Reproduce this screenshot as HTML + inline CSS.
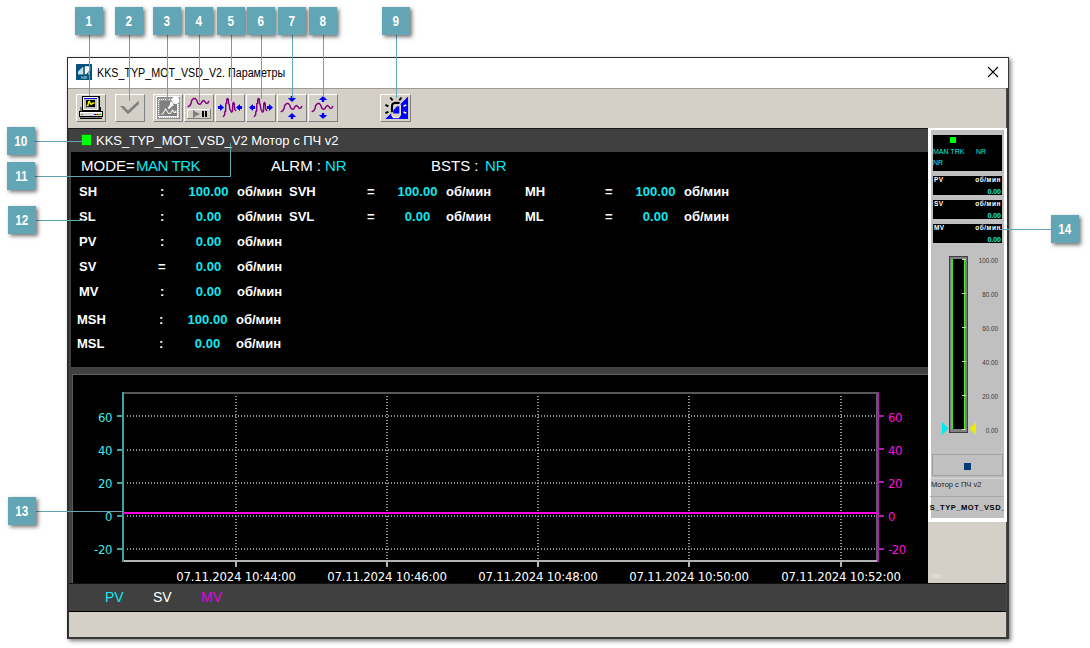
<!DOCTYPE html>
<html lang="ru">
<head>
<meta charset="utf-8">
<title>KKS_TYP_MOT_VSD_V2. Параметры</title>
<style>
*{box-sizing:border-box;margin:0;padding:0}
html,body{width:1090px;height:648px;overflow:hidden;background:#fff}
body{position:relative;font-family:"Liberation Sans",sans-serif;color:#fff}
.a{position:absolute}
.t{position:absolute;white-space:nowrap;line-height:1}
/* callouts */
.co{position:absolute;width:28px;height:28px;background:#62a5b5;color:#fff;font-weight:bold;font-size:14px;line-height:29px;text-align:center;box-shadow:2px 2px 4px rgba(0,0,0,.55);z-index:30;font-family:"Liberation Sans",sans-serif}
.co span{display:inline-block;transform:scaleX(.84)}
.ln{position:absolute;background:#62a5b5;z-index:29}
/* window */
#win{left:67px;top:57px;width:942px;height:582px;background:#d4d0c8;border:1px solid #2c2c2c;border-right:2px solid #383838;border-bottom:2px solid #383838;box-shadow:2px 2px 4px rgba(0,0,0,.5)}
#title{left:68px;top:58px;width:940px;height:30px;background:#fff}
.btn{position:absolute;top:94px;width:30px;height:28px;background:#d4d0c8;border:1px solid;border-color:#fff #808080 #808080 #fff}
.cy{color:#10e8f0}
.b{font-weight:bold}
.fp{font-size:7px}
.fu{letter-spacing:.55px;font-size:6.5px}
.fl{font-size:6.5px;letter-spacing:.3px}
.gl{font-size:6.3px;color:#383838}
.ch{font-family:"DejaVu Sans Condensed","DejaVu Sans",sans-serif;font-size:13px;letter-spacing:-0.4px}
.tm{letter-spacing:-0.19px}
.r{font-size:13px;color:#fff}
.r.cy{color:#10e8f0}
.v{width:81px;text-align:center}
</style>
</head>
<body>
<!-- WINDOW -->
<div id="win" class="a"></div>
<div id="title" class="a"></div>
<div class="a" style="left:68px;top:88px;width:939px;height:1px;background:#9c9a96"></div>
<svg class="a" style="left:76px;top:64px" width="16" height="16" viewBox="76 64 16 16"><rect x="76" y="64" width="16" height="16" rx=".6" fill="#02527a"/><path d="M78 71.5 L82.7 67 L83.2 67 L83.2 74.4 L78 74.4 Z" fill="#c6dbe6"/><rect x="83.2" y="67" width="1.6" height="7.4" fill="#3a7ca2"/><path d="M85 66.2 L90.2 66.2 L90.2 69.5 L86.2 74.2 L85 74.2 Z" fill="#fdfeff"/><path d="M88 74.4 L88 72.8 L89.6 71 L89.6 74.4 Z" fill="#9fc0d2"/><text x="84" y="78.6" font-family="Liberation Sans,sans-serif" font-weight="bold" font-size="3.2" fill="#a9c9da" text-anchor="middle">HMI</text></svg>
<div class="t" id="ttl" style="left:97px;top:67px;font-size:12px;color:#000;transform:scaleX(.893);transform-origin:0 0">KKS_TYP_MOT_VSD_V2. Параметры</div>
<svg class="a" style="left:987px;top:66px" width="12" height="12" viewBox="0 0 12 12"><path d="M1 1 L11 11 M11 1 L1 11" stroke="#000" stroke-width="1.1" fill="none"/></svg>

<!-- toolbar buttons -->
<div class="btn" style="left:76px;width:30px"></div>
<div class="btn" style="left:115px;width:30px"></div>
<div class="btn" style="left:153px;width:30px"></div>
<div class="btn" style="left:184px;width:30px"></div>
<div class="btn" style="left:215px;width:30px"></div>
<div class="btn" style="left:246px;width:30px"></div>
<div class="btn" style="left:277px;width:30px"></div>
<div class="btn" style="left:308px;width:30px"></div>
<div class="btn" style="left:380px;width:31px"></div>
<svg class="a" style="left:74px;top:92px" width="342" height="32" viewBox="74 92 342 32">
<g shape-rendering="crispEdges">
<rect x="80" y="107" width="3" height="4" fill="#808080"/><rect x="99" y="107" width="2" height="4" fill="#000"/>
<rect x="82" y="96" width="18" height="15" fill="#000"/>
<rect x="83" y="97" width="15" height="13" fill="#fff"/>
<rect x="98" y="98" width="1" height="12" fill="#808080"/>
<rect x="84" y="98" width="13" height="1" fill="#0000ff"/>
<rect x="84" y="99" width="13" height="10" fill="#c0c0c0"/>
<rect x="86" y="100" width="9" height="7" fill="#000"/>
<rect x="79" y="111" width="24" height="6" fill="#000"/>
<rect x="80" y="112" width="22" height="1" fill="#fff"/>
<rect x="80" y="113" width="22" height="3" fill="#d8d8d0"/>
<rect x="81" y="114" width="2" height="1" fill="#808080"/>
<rect x="94" y="114" width="2" height="1" fill="#0000ff"/><rect x="96" y="114" width="2" height="1" fill="#ff0000"/><rect x="98" y="114" width="3" height="1" fill="#00c000"/>
<rect x="80" y="117" width="22" height="1" fill="#808080"/>
<rect x="80" y="118" width="22" height="1" fill="#000"/>
</g>
<path d="M86.5 105.5 L88 105.5 L88.5 102 L89.5 101.5 L90.5 104 L92 104 L93 103 L94.5 103" stroke="#ffff00" stroke-width="1.3" fill="none"/>
<path d="M120 106 L123.6 106 L128 110.4 L138.6 100.8 L139 104 L128 114.2 Z" fill="#808080"/>
<g shape-rendering="crispEdges"><rect x="156" y="96" width="24" height="23" fill="#fff"/>
<rect x="157" y="97" width="23" height="22" fill="#909090"/>
<rect x="158" y="98" width="21" height="20" fill="#9a9a9a"/>
<rect x="159" y="116" width="20" height="2" fill="#f4f4f4"/><rect x="177" y="104" width="2" height="14" fill="#f4f4f4"/>
<path d="M158.5 99.5 H172" stroke="#fff" stroke-width="1" stroke-dasharray="1 1"/>
<path d="M158.5 100 V118" stroke="#fff" stroke-width="1" stroke-dasharray="1 1"/>
<path d="M160 117.5 H179" stroke="#b0b0b0" stroke-width="1" stroke-dasharray="1 1"/>
<path d="M178.5 105 V118" stroke="#b0b0b0" stroke-width="1" stroke-dasharray="1 1"/>
<rect x="160" y="101" width="17" height="15" fill="#808080"/></g>
<path d="M161.4 114.3 L163 113.5 L165.6 109 L168.5 113.5 L170.4 113.5 L172.6 110 L174 112.4 L175.8 112.4 L175.8 110.6" stroke="#f0f0e8" stroke-width="1.1" fill="none"/>
<path d="M172.8 103.2 L168.4 108.6" stroke="#fff" stroke-width="2.2"/>
<path d="M171 101.5 L170.5 104.5 L173.5 105.5" stroke="#fff" stroke-width="1.2" fill="#fff"/>
<circle cx="175.7" cy="100.2" r="3.7" fill="#fff"/>
<path d="M188.2 106.6 L189.9 105.6 L191.1 103.4 L191.6 100.6 L193.6 98.4 L195.3 98.4 L196.8 100.4 L197.8 103.1 L199.3 104.3 L200.8 103.9 L202.2 101.4 L203.7 100.4 L205.2 101.9 L206.2 103.4 L207.7 103.1 L208.7 101.4" stroke="#800080" stroke-width="1.45" fill="none" stroke-linejoin="round" stroke-linecap="round"/>
<g shape-rendering="crispEdges"><rect x="187" y="109" width="24" height="10" fill="#808080"/><rect x="187" y="109" width="23" height="9" fill="#fff"/><rect x="188" y="110" width="22" height="8" fill="#d4d0c8"/>
<rect x="193" y="110" width="1" height="8" fill="#808080"/>
<rect x="202" y="111" width="2" height="6" fill="#000"/><rect x="205" y="111" width="2" height="6" fill="#000"/></g>
<path d="M194 111 L200 114 L194 117 Z" fill="#808080"/>
<path d="M223.4 116.4 L224.6 115.0 L224.9 111.5 L225.6 111.3 L225.8 103.6 L226.6 103.4 L226.8 99.4 L227.6 98.4 L228.3 99.4 L228.6 103.6 L229.3 104.8 L229.8 109.0 L230.8 110.8 L231.5 112.2 L232.5 111.0 L232.8 103.6 L233.5 102.4 L234.2 103.6 L234.7 109.3 L235.7 110.5" stroke="#800080" stroke-width="1.45" fill="none" stroke-linejoin="round" stroke-linecap="round"/>
<path d="M224 107.5 L220 104.0 L220 106.0 L218 106.0 L218 109.0 L220 109.0 L220 111.0 Z" fill="#0000ff"/>
<path d="M236 107.5 L240 104.0 L240 106.0 L242 106.0 L242 109.0 L240 109.0 L240 111.0 Z" fill="#0000ff"/>
<path d="M254.4 116.4 L255.6 115.0 L255.9 111.5 L256.6 111.3 L256.8 103.6 L257.6 103.4 L257.8 99.4 L258.6 98.4 L259.3 99.4 L259.6 103.6 L260.3 104.8 L260.8 109.0 L261.8 110.8 L262.5 112.2 L263.5 111.0 L263.8 103.6 L264.5 102.4 L265.2 103.6 L265.7 109.3 L266.7 110.5" stroke="#800080" stroke-width="1.45" fill="none" stroke-linejoin="round" stroke-linecap="round"/>
<path d="M249 107.5 L253 104.0 L253 106.0 L255 106.0 L255 109.0 L253 109.0 L253 111.0 Z" fill="#0000ff"/>
<path d="M273 107.5 L269 104.0 L269 106.0 L267 106.0 L267 109.0 L269 109.0 L269 111.0 Z" fill="#0000ff"/>
<path d="M281.2 111.6 L282.9 110.6 L284.1 108.4 L284.6 105.6 L286.6 103.4 L288.3 103.4 L289.8 105.4 L290.8 108.1 L292.3 109.3 L293.8 108.9 L295.2 106.4 L296.7 105.4 L298.2 106.9 L299.2 108.4 L300.7 108.1 L301.7 106.4" stroke="#800080" stroke-width="1.45" fill="none" stroke-linejoin="round" stroke-linecap="round"/>
<path d="M292 102 L287.8 98 L290.8 98 L290.8 96 L293.2 96 L293.2 98 L296.2 98 Z" fill="#0000ff"/>
<path d="M292 113 L287.8 117 L290.8 117 L290.8 119 L293.2 119 L293.2 117 L296.2 117 Z" fill="#0000ff"/>
<path d="M312.2 111.6 L313.9 110.6 L315.1 108.4 L315.6 105.6 L317.6 103.4 L319.3 103.4 L320.8 105.4 L321.8 108.1 L323.3 109.3 L324.8 108.9 L326.2 106.4 L327.7 105.4 L329.2 106.9 L330.2 108.4 L331.7 108.1 L332.7 106.4" stroke="#800080" stroke-width="1.45" fill="none" stroke-linejoin="round" stroke-linecap="round"/>
<path d="M323 96 L318.8 100 L321.8 100 L321.8 102 L324.2 102 L324.2 100 L327.2 100 Z" fill="#0000ff"/>
<path d="M323 119 L318.8 115 L321.8 115 L321.8 113 L324.2 113 L324.2 115 L327.2 115 Z" fill="#0000ff"/>
<path d="M408 96 L408 119 L384.7 119 Z" fill="#0000ff"/>
<path d="M384.7 119.2 L408.2 96" stroke="#f4ecc0" stroke-width=".8" fill="none"/>
<path d="M391.8 115.5 L391.8 105 Q392 102.6 396 102.6 L398.5 102.8 Q400.3 103.5 400.3 106 L400.3 115 L398.5 117.6 L393.5 117.6 Z" fill="#d4d0c8"/>
<path d="M393.3 110.2 L397.2 106.2 L399.3 106.2 L399.3 113.6 L393.3 113.6 Z" fill="#0000ff"/>
<path d="M399.3 103.4 Q400.4 104.2 400.4 106 L400.4 115 L398.5 117.6 L393.5 117.6 L391.8 115.5 L391.8 112.5" stroke="#f4ecc0" stroke-width="1.1" fill="none"/>
<path d="M391.9 112.2 L392 105.4 Q392.4 102.7 396 102.7 L399.6 103.1" stroke="#000" stroke-width="2" fill="none"/>
<path d="M390.3 97.5 L392.6 100.4 M401.5 97.5 L399.3 100.4 M385.4 104.8 L388.4 106.4 M385.4 113 L388.4 111.8" stroke="#000" stroke-width="1.9" fill="none"/>
<path d="M406.3 104.9 L403.5 106.3 M403.5 111.9 L406.3 113.2" stroke="#f4ecc0" stroke-width="1.6" fill="none"/>
</svg>
<!-- main dark area -->
<div class="a" style="left:68px;top:128px;width:860px;height:455px;background:#404040;border-top:1px solid #181818"></div>
<div class="a" style="left:71px;top:152px;width:857px;height:215px;background:#000"></div>
<div class="a" style="left:72px;top:374px;width:856px;height:209px;background:#000;border-top:1px solid #626262;border-left:1px solid #5c5c5c"></div>
<!-- legend + status bar -->
<div class="a" style="left:68px;top:128px;width:1px;height:509px;background:#303030"></div>
<div class="a" style="left:69px;top:583px;width:938px;height:29px;background:#404040;border-top:1px solid #101010;border-bottom:1px solid #000"></div>
<div class="a" style="left:69px;top:612px;width:938px;height:25px;background:#d4d0c8"></div>
<div class="a" style="left:1006px;top:88px;width:1px;height:549px;background:#484848"></div>

<!-- header text -->
<div class="a" style="left:81px;top:134px;width:11px;height:12px;background:#00ff00;border:1px solid #1c6c1c"></div>
<div class="t" id="hdr" style="left:96px;top:134px;font-size:13px;color:#fff">KKS_TYP_MOT_VSD_V2 Мотор с ПЧ v2</div>
<div class="t" id="mode" style="left:81px;top:158px;font-size:15px;color:#fff">MODE=</div>
<div class="t cy" id="modev" style="left:136px;top:158px;font-size:15px;letter-spacing:-.45px">MAN TRK</div>
<div class="t" id="alrm" style="left:271px;top:158px;font-size:15px;color:#fff">ALRM :</div>
<div class="t cy" id="alrmv" style="left:325px;top:158px;font-size:15px">NR</div>
<div class="t" id="bsts" style="left:431px;top:158px;font-size:15px;color:#fff">BSTS :</div>
<div class="t cy" id="bstsv" style="left:485px;top:158px;font-size:15px">NR</div>
<div class="t b r" style="left:79px;top:185px">SH</div><div class="t b r" style="left:160px;top:185px">:</div><div class="t b r cy v" style="left:168px;top:185px">100.00</div><div class="t b r" style="left:237px;top:185px">об/мин</div>
<div class="t b r" style="left:79px;top:210px">SL</div><div class="t b r" style="left:160px;top:210px">:</div><div class="t b r cy v" style="left:168px;top:210px">0.00</div><div class="t b r" style="left:237px;top:210px">об/мин</div>
<div class="t b r" style="left:79px;top:235px">PV</div><div class="t b r" style="left:160px;top:235px">:</div><div class="t b r cy v" style="left:168px;top:235px">0.00</div><div class="t b r" style="left:237px;top:235px">об/мин</div>
<div class="t b r" style="left:79px;top:260px">SV</div><div class="t b r" style="left:158px;top:260px">=</div><div class="t b r cy v" style="left:168px;top:260px">0.00</div><div class="t b r" style="left:237px;top:260px">об/мин</div>
<div class="t b r" style="left:79px;top:285px">MV</div><div class="t b r" style="left:160px;top:285px">:</div><div class="t b r cy v" style="left:168px;top:285px">0.00</div><div class="t b r" style="left:237px;top:285px">об/мин</div>
<div class="t b r" style="left:77px;top:313px">MSH</div><div class="t b r" style="left:159px;top:313px">:</div><div class="t b r cy v" style="left:167px;top:313px">100.00</div><div class="t b r" style="left:236px;top:313px">об/мин</div>
<div class="t b r" style="left:77px;top:337px">MSL</div><div class="t b r" style="left:159px;top:337px">:</div><div class="t b r cy v" style="left:167px;top:337px">0.00</div><div class="t b r" style="left:236px;top:337px">об/мин</div>
<div class="t b r" style="left:289px;top:185px">SVH</div><div class="t b r" style="left:367px;top:185px">=</div><div class="t b r cy v" style="left:377px;top:185px">100.00</div><div class="t b r" style="left:446px;top:185px">об/мин</div>
<div class="t b r" style="left:289px;top:210px">SVL</div><div class="t b r" style="left:367px;top:210px">=</div><div class="t b r cy v" style="left:377px;top:210px">0.00</div><div class="t b r" style="left:446px;top:210px">об/мин</div>
<div class="t b r" style="left:525px;top:185px">MH</div><div class="t b r" style="left:605px;top:185px">=</div><div class="t b r cy v" style="left:615px;top:185px">100.00</div><div class="t b r" style="left:684px;top:185px">об/мин</div>
<div class="t b r" style="left:525px;top:210px">ML</div><div class="t b r" style="left:605px;top:210px">=</div><div class="t b r cy v" style="left:615px;top:210px">0.00</div><div class="t b r" style="left:684px;top:210px">об/мин</div>

<!-- chart -->
<svg class="a" style="left:73px;top:375px" width="854" height="208" viewBox="73 375 854 208" shape-rendering="crispEdges">
<defs><pattern id="dh" width="3" height="2" patternUnits="userSpaceOnUse" x="124" y="0"><rect width="1" height="2" fill="#929292"/></pattern><pattern id="dv" width="2" height="3" patternUnits="userSpaceOnUse" x="0" y="393"><rect width="2" height="1" fill="#929292"/></pattern></defs>
<rect x="124" y="392" width="753" height="2" fill="#585858"/>
<g transform="translate(0,415)"><rect x="125" y="0" width="752" height="2" fill="url(#dh)"/></g>
<g transform="translate(0,449)"><rect x="125" y="0" width="752" height="2" fill="url(#dh)"/></g>
<g transform="translate(0,482)"><rect x="125" y="0" width="752" height="2" fill="url(#dh)"/></g>
<g transform="translate(0,515)"><rect x="125" y="0" width="752" height="2" fill="url(#dh)"/></g>
<g transform="translate(0,548)"><rect x="125" y="0" width="752" height="2" fill="url(#dh)"/></g>
<g transform="translate(235,0)"><rect x="0" y="395" width="2" height="165" fill="url(#dv)"/></g>
<rect x="235" y="562" width="2" height="5" fill="#b4b4b4"/>
<g transform="translate(386,0)"><rect x="0" y="395" width="2" height="165" fill="url(#dv)"/></g>
<rect x="386" y="562" width="2" height="5" fill="#b4b4b4"/>
<g transform="translate(537,0)"><rect x="0" y="395" width="2" height="165" fill="url(#dv)"/></g>
<rect x="537" y="562" width="2" height="5" fill="#b4b4b4"/>
<g transform="translate(688,0)"><rect x="0" y="395" width="2" height="165" fill="url(#dv)"/></g>
<rect x="688" y="562" width="2" height="5" fill="#b4b4b4"/>
<g transform="translate(840,0)"><rect x="0" y="395" width="2" height="165" fill="url(#dv)"/></g>
<rect x="840" y="562" width="2" height="5" fill="#b4b4b4"/>
<rect x="124" y="560" width="755" height="2" fill="#b4b4b4"/>
<rect x="122" y="392" width="2" height="170" fill="#3ea2a2"/>
<rect x="876" y="394" width="1" height="166" fill="#606060"/><rect x="877" y="392" width="2" height="170" fill="#aa20aa"/>
<rect x="117" y="415" width="5" height="2" fill="#3ea2a2"/>
<rect x="879" y="415" width="5" height="2" fill="#aa20aa"/>
<rect x="117" y="449" width="5" height="2" fill="#3ea2a2"/>
<rect x="879" y="448" width="5" height="2" fill="#aa20aa"/>
<rect x="117" y="482" width="5" height="2" fill="#3ea2a2"/>
<rect x="879" y="481" width="5" height="2" fill="#aa20aa"/>
<rect x="117" y="515" width="5" height="2" fill="#3ea2a2"/>
<rect x="879" y="515" width="5" height="2" fill="#aa20aa"/>
<rect x="117" y="548" width="5" height="2" fill="#3ea2a2"/>
<rect x="879" y="548" width="5" height="2" fill="#aa20aa"/>
<rect x="123" y="512" width="755" height="2" fill="#ff00e0"/>
</svg>
<div class="t ch" style="left:80px;width:32px;text-align:right;top:411px;color:#40e8e8">60</div><div class="t ch" style="left:888px;top:411px;color:#ff10d8">60</div>
<div class="t ch" style="left:80px;width:32px;text-align:right;top:444px;color:#40e8e8">40</div><div class="t ch" style="left:888px;top:444px;color:#ff10d8">40</div>
<div class="t ch" style="left:80px;width:32px;text-align:right;top:477px;color:#40e8e8">20</div><div class="t ch" style="left:888px;top:477px;color:#ff10d8">20</div>
<div class="t ch" style="left:80px;width:32px;text-align:right;top:510px;color:#40e8e8">0</div><div class="t ch" style="left:888px;top:510px;color:#ff10d8">0</div>
<div class="t ch" style="left:80px;width:32px;text-align:right;top:543px;color:#40e8e8">-20</div><div class="t ch" style="left:888px;top:543px;color:#ff10d8">-20</div>
<div class="t ch tm" style="left:166px;width:140px;text-align:center;top:570px;color:#fff">07.11.2024 10:44:00</div>
<div class="t ch tm" style="left:317px;width:140px;text-align:center;top:570px;color:#fff">07.11.2024 10:46:00</div>
<div class="t ch tm" style="left:468px;width:140px;text-align:center;top:570px;color:#fff">07.11.2024 10:48:00</div>
<div class="t ch tm" style="left:619px;width:140px;text-align:center;top:570px;color:#fff">07.11.2024 10:50:00</div>
<div class="t ch tm" style="left:771px;width:140px;text-align:center;top:570px;color:#fff">07.11.2024 10:52:00</div>
<!-- faceplate -->
<div class="a" style="left:928px;top:128px;width:79px;height:394px;background:#c0c0c0;border:3px solid #fff;border-top-width:2px;border-bottom-width:4px"></div>
<div class="a" style="left:933px;top:135px;width:69px;height:36px;background:#000"></div>
<div class="a" style="left:950px;top:137px;width:6px;height:6px;background:#00ff00"></div>
<div class="t fp cy" style="left:933px;top:148px">MAN TRK</div>
<div class="t fp cy" style="left:976px;top:148px">NR</div>
<div class="t fp cy" style="left:933px;top:159px">NR</div>
<div class="a" style="left:933px;top:176px;width:69px;height:19px;background:#000"></div><div class="t fp b fl" style="left:934px;top:177px;color:#fff">PV</div><div class="t fp b fu" style="left:940px;width:61px;text-align:right;top:177px;color:#fff">об/мин</div><div class="t fp b cy" style="left:940px;width:61px;text-align:right;top:188px">0.00</div>
<div class="a" style="left:933px;top:200px;width:69px;height:19px;background:#000"></div><div class="t fp b fl" style="left:934px;top:201px;color:#fff">SV</div><div class="t fp b fu" style="left:940px;width:61px;text-align:right;top:201px;color:#fff">об/мин</div><div class="t fp b cy" style="left:940px;width:61px;text-align:right;top:212px">0.00</div>
<div class="a" style="left:933px;top:224px;width:69px;height:19px;background:#000"></div><div class="t fp b fl" style="left:934px;top:225px;color:#fff">MV</div><div class="t fp b fu" style="left:940px;width:61px;text-align:right;top:225px;color:#fff">об/мин</div><div class="t fp b cy" style="left:940px;width:61px;text-align:right;top:236px">0.00</div>
<div class="a" style="left:949px;top:256px;width:19px;height:177px;background:#808080;border:1px solid #404040"></div>
<div class="a" style="left:953px;top:259px;width:11px;height:170px;background:#000"></div>
<div class="a" style="left:951px;top:259px;width:2px;height:170px;background:#40e020"></div>
<div class="a" style="left:964px;top:259px;width:1px;height:170px;background:#50f020"></div>
<div class="a" style="left:962px;top:259px;width:4px;height:1px;background:#c8e8c0"></div><div class="t gl" style="left:960px;width:38px;text-align:right;top:258px">100.00</div>
<div class="a" style="left:962px;top:293px;width:4px;height:1px;background:#c8e8c0"></div><div class="t gl" style="left:960px;width:38px;text-align:right;top:292px">80.00</div>
<div class="a" style="left:962px;top:327px;width:4px;height:1px;background:#c8e8c0"></div><div class="t gl" style="left:960px;width:38px;text-align:right;top:326px">60.00</div>
<div class="a" style="left:962px;top:361px;width:4px;height:1px;background:#c8e8c0"></div><div class="t gl" style="left:960px;width:38px;text-align:right;top:360px">40.00</div>
<div class="a" style="left:962px;top:395px;width:4px;height:1px;background:#c8e8c0"></div><div class="t gl" style="left:960px;width:38px;text-align:right;top:394px">20.00</div>
<div class="a" style="left:962px;top:429px;width:4px;height:1px;background:#c8e8c0"></div><div class="t gl" style="left:960px;width:38px;text-align:right;top:428px">0.00</div>
<svg class="a" style="left:942px;top:422px" width="34" height="13" viewBox="0 0 34 13"><path d="M0 0 L6.5 6.5 L0 13 Z" fill="#00e8f0"/><path d="M34 0 L27.5 6.5 L34 13 Z" fill="#f0e800"/></svg>
<div class="a" style="left:932px;top:454px;width:71px;height:22px;border:1px solid #a0a0a0"></div>
<div class="a" style="left:964px;top:463px;width:7px;height:7px;background:#003c78"></div>
<div class="a" style="left:930px;top:478px;width:74px;height:1px;background:#d8d8d8"></div>
<div class="t" style="left:931px;top:481px;font-size:7.5px;color:#202020">Мотор с  ПЧ v2</div>
<div class="a" style="left:930px;top:496px;width:74px;height:1px;background:#a8a8a8"></div>
<div class="a" style="left:930px;top:500px;width:74px;height:16px;overflow:hidden"><div class="t b" style="left:-14px;width:102px;text-align:center;top:4px;font-size:7.5px;letter-spacing:.55px;color:#000">KKS_TYP_MOT_VSD_V2</div></div>
<div class="a" style="left:932px;top:574px;width:9px;height:4px;background:#dedbd4"></div>
<!-- legend -->
<div class="t cy" style="left:105px;top:590px;font-size:14px">PV</div>
<div class="t" style="left:153px;top:590px;font-size:14px;color:#fff">SV</div>
<div class="t" style="left:201px;top:590px;font-size:14px;color:#e000e0">MV</div>

<!-- CALLOUTS -->
<div class="co" style="left:75px;top:7px"><span>1</span></div>
<div class="co" style="left:115px;top:7px"><span>2</span></div>
<div class="co" style="left:153px;top:7px"><span>3</span></div>
<div class="co" style="left:185px;top:7px"><span>4</span></div>
<div class="co" style="left:217px;top:7px"><span>5</span></div>
<div class="co" style="left:247px;top:7px"><span>6</span></div>
<div class="co" style="left:278px;top:7px"><span>7</span></div>
<div class="co" style="left:309px;top:7px"><span>8</span></div>
<div class="co" style="left:382px;top:7px"><span>9</span></div>
<div class="ln" style="left:89px;top:35px;width:1px;height:61px"></div>
<div class="ln" style="left:129px;top:35px;width:1px;height:66px"></div>
<div class="ln" style="left:167px;top:35px;width:1px;height:65px"></div>
<div class="ln" style="left:199px;top:35px;width:1px;height:67px"></div>
<div class="ln" style="left:231px;top:35px;width:1px;height:66px"></div>
<div class="ln" style="left:261px;top:35px;width:1px;height:64px"></div>
<div class="ln" style="left:292px;top:35px;width:1px;height:63px"></div>
<div class="ln" style="left:323px;top:35px;width:1px;height:62px"></div>
<div class="ln" style="left:396px;top:35px;width:1px;height:63px"></div>
<div class="ln" style="left:35px;top:141px;width:49px;height:1px"></div>
<div class="ln" style="left:35px;top:176px;width:196px;height:1px"></div>
<div class="ln" style="left:230px;top:143px;width:1px;height:33px"></div>
<div class="ln" style="left:36px;top:220px;width:48px;height:1px"></div>
<div class="ln" style="left:36px;top:511px;width:87px;height:1px"></div>
<div class="ln" style="left:1000px;top:229px;width:51px;height:1px"></div>
<div class="co" style="left:7px;top:127px"><span>10</span></div>
<div class="co" style="left:7px;top:162px"><span>11</span></div>
<div class="co" style="left:8px;top:206px"><span>12</span></div>
<div class="co" style="left:8px;top:497px"><span>13</span></div>
<div class="co" style="left:1051px;top:215px"><span>14</span></div>
</body>
</html>
